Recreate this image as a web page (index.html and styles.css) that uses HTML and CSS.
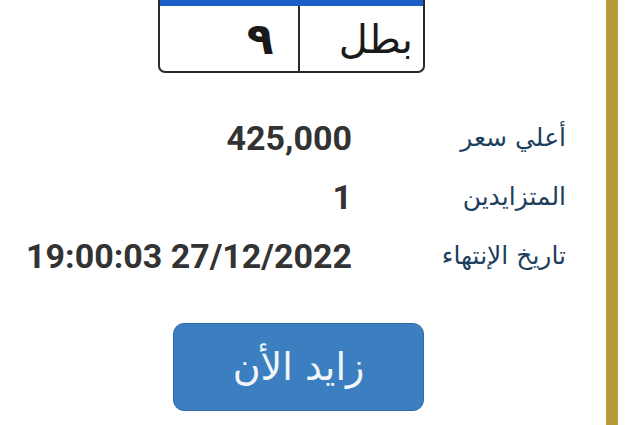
FILE: index.html
```html
<!DOCTYPE html>
<html lang="ar" dir="rtl">
<head>
<meta charset="utf-8">
<link rel="stylesheet" href="styles.css">
</head>
<body>
<div class="page">
  <div class="rail"></div>
  <main class="card">
    <div class="plate-wrap">
      <div class="plate">
        <div class="plate-head"></div>
        <div class="plate-body">
          <div class="cell letters">بطل</div>
          <div class="cell digits">٩</div>
        </div>
      </div>
    </div>
    <div class="info">
      <div class="label">أعلي سعر</div>
      <div class="value">425,000</div>
      <div class="label">المتزايدين</div>
      <div class="value">1</div>
      <div class="label">تاريخ الإنتهاء</div>
      <div class="value">27/12/2022 19:00:03</div>
    </div>
    <div class="actions">
      <button class="bid">زايد الأن</button>
    </div>
  </main>
</div>
</body>
</html>
```

FILE: styles.css
```css
html, body {
  margin: 0;
  padding: 0;
  background: #ffffff;
  width: 640px;
  height: 425px;
  overflow: hidden;
}
.page {
  display: flex;
  flex-direction: row;
  width: 640px;
  height: 425px;
  padding-right: 22px;
  box-sizing: border-box;
}
.rail {
  width: 12px;
  height: 100%;
  background: #b99a3a;
  flex: none;
}
.card {
  flex: none;
  width: 606px;
  display: flex;
  flex-direction: column;
}
.plate-wrap {
  display: flex;
  justify-content: flex-start;
  padding-right: 181px;
}
.plate {
  width: 267px;
  box-sizing: border-box;
  border: 2px solid #2a2a2a;
  border-top: none;
  border-radius: 0 0 7px 7px;
  overflow: hidden;
}
.plate-head {
  height: 6px;
  background: #1b5fc6;
}
.plate-body {
  display: flex;
  flex-direction: row;
  height: 65px;
}
.cell {
  flex: 1;
  display: flex;
  align-items: center;
  font-family: "DejaVu Sans", sans-serif;
  color: #1a1a1a;
  padding: 0 10px;
}
.letters {
  border-left: 2px solid #2a2a2a;
  justify-content: flex-start;
  font-size: 40px;
}
.digits {
  justify-content: flex-start;
  padding-right: 24px;
  font-weight: bold;
  font-size: 44px;
}
.info {
  display: grid;
  grid-template-columns: 214px auto;
  justify-content: start;
  padding-right: 40px;
  margin-top: 35px;
}
.label, .value {
  height: 59px;
  display: flex;
  align-items: center;
}
.label {
  font-family: "DejaVu Sans", sans-serif;
  font-size: 25px;
  color: #1d3f5e;
}
.value {
  font-family: Roboto, "Liberation Sans", sans-serif;
  font-weight: bold;
  font-size: 34px;
  color: #333333;
  white-space: nowrap;
  justify-content: flex-start;
}
.actions {
  display: flex;
  justify-content: flex-start;
  padding-right: 182px;
  margin-top: 38px;
}
.bid {
  width: 251px;
  height: 88px;
  border: 1px solid #2f6aa6;
  border-radius: 11px;
  background: #3b7fc1;
  color: #f2f6fb;
  font-family: "DejaVu Sans", sans-serif;
  font-size: 38px;
  padding: 0;
}
```
